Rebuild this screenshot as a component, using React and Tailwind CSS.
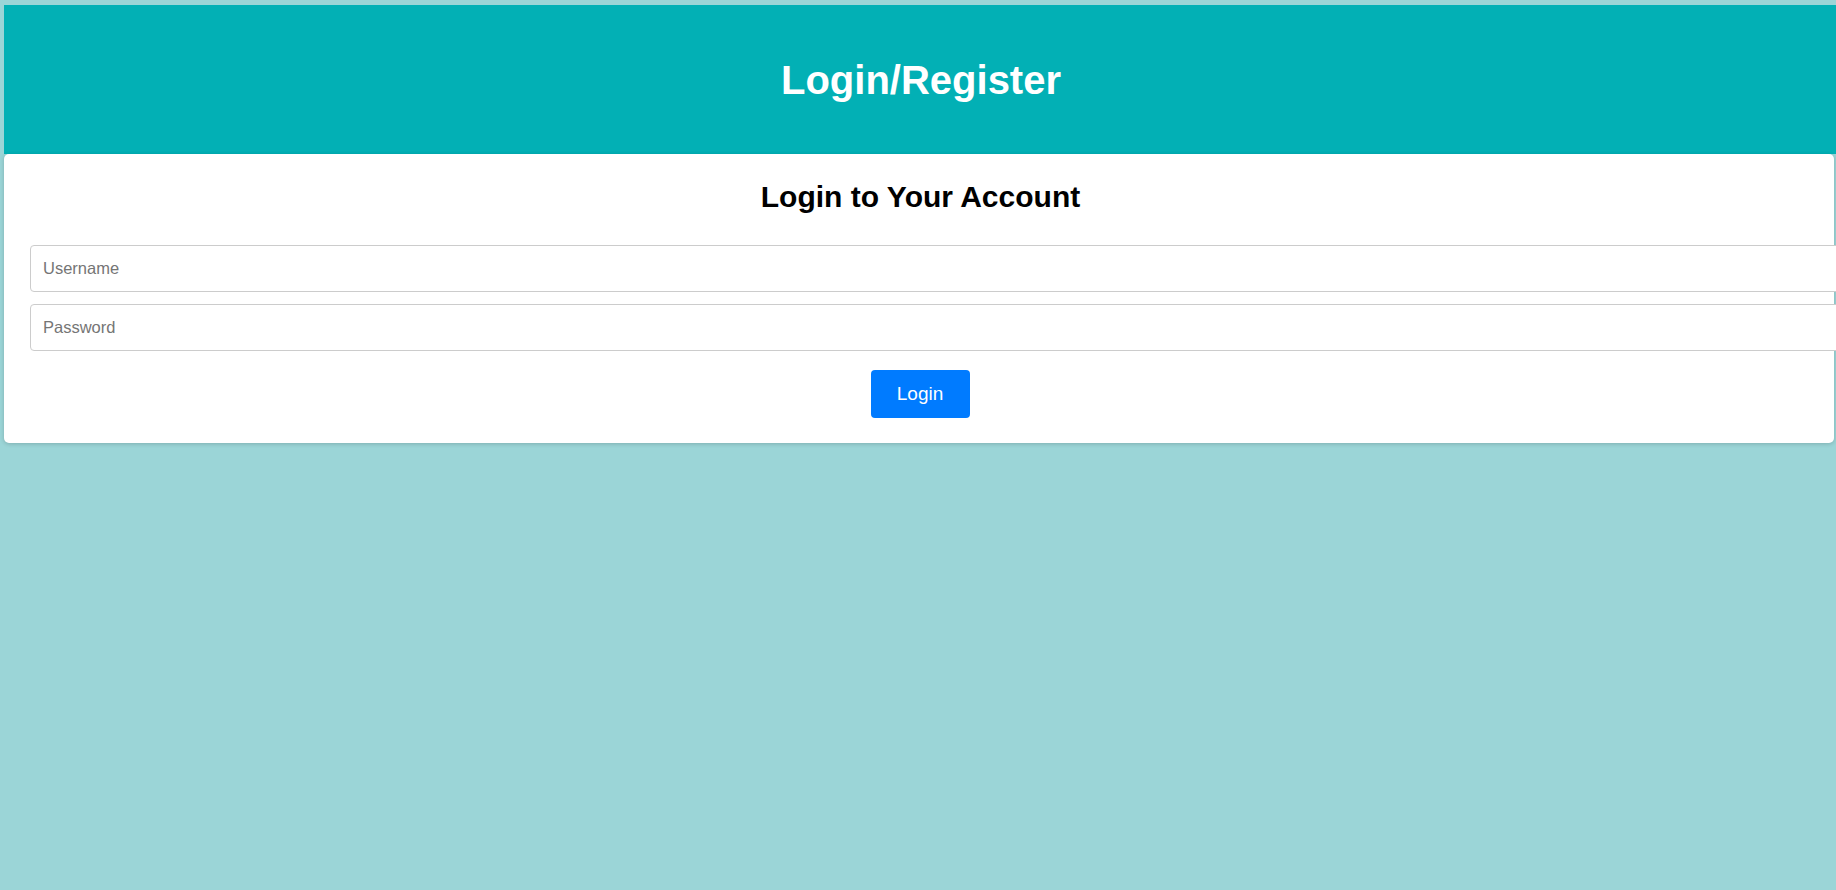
import React from "react";

const App = () => {
    return (
        <div className="min-h-screen w-full overflow-hidden bg-[#9bd5d7] pt-[5px] pl-[4px] font-['Liberation_Sans',Arial,sans-serif]">
            {/* header bar */}
            <div className="flex h-[149px] items-center justify-center bg-[#02b0b5] pl-[2px]">
                <h1 className="text-[40px] font-bold leading-[46px] text-white">Login/Register</h1>
            </div>

            {/* login card */}
            <div className="mr-[2px] rounded-[5px] bg-white px-[26px] pt-[25px] pb-[25px] shadow-[0_1px_4px_rgba(0,0,0,0.18)]">
                <h2 className="pl-[3px] text-center text-[30px] font-bold leading-[35px] text-black">Login to Your Account</h2>

                <div className="mt-[31px] flex flex-col gap-[12px]">
                    <input
                        type="text"
                        placeholder="Username"
                        className="h-[47px] w-[calc(100%+32px)] rounded-[4px] border border-[#cccccc] bg-white pl-[12px] text-[16.5px] text-black outline-none placeholder:text-[#757575]"
                    />
                    <input
                        type="password"
                        placeholder="Password"
                        className="h-[47px] w-[calc(100%+32px)] rounded-[4px] border border-[#cccccc] bg-white pl-[12px] text-[16.5px] text-black outline-none placeholder:text-[#757575]"
                    />
                </div>

                <div className="mt-[19px] flex justify-center pl-[2px]">
                    <button className="h-[48px] w-[99px] rounded-[4px] bg-[#007bff] text-[19px] text-white">
                        Login
                    </button>
                </div>
            </div>
        </div>
    );
};

export default App;
